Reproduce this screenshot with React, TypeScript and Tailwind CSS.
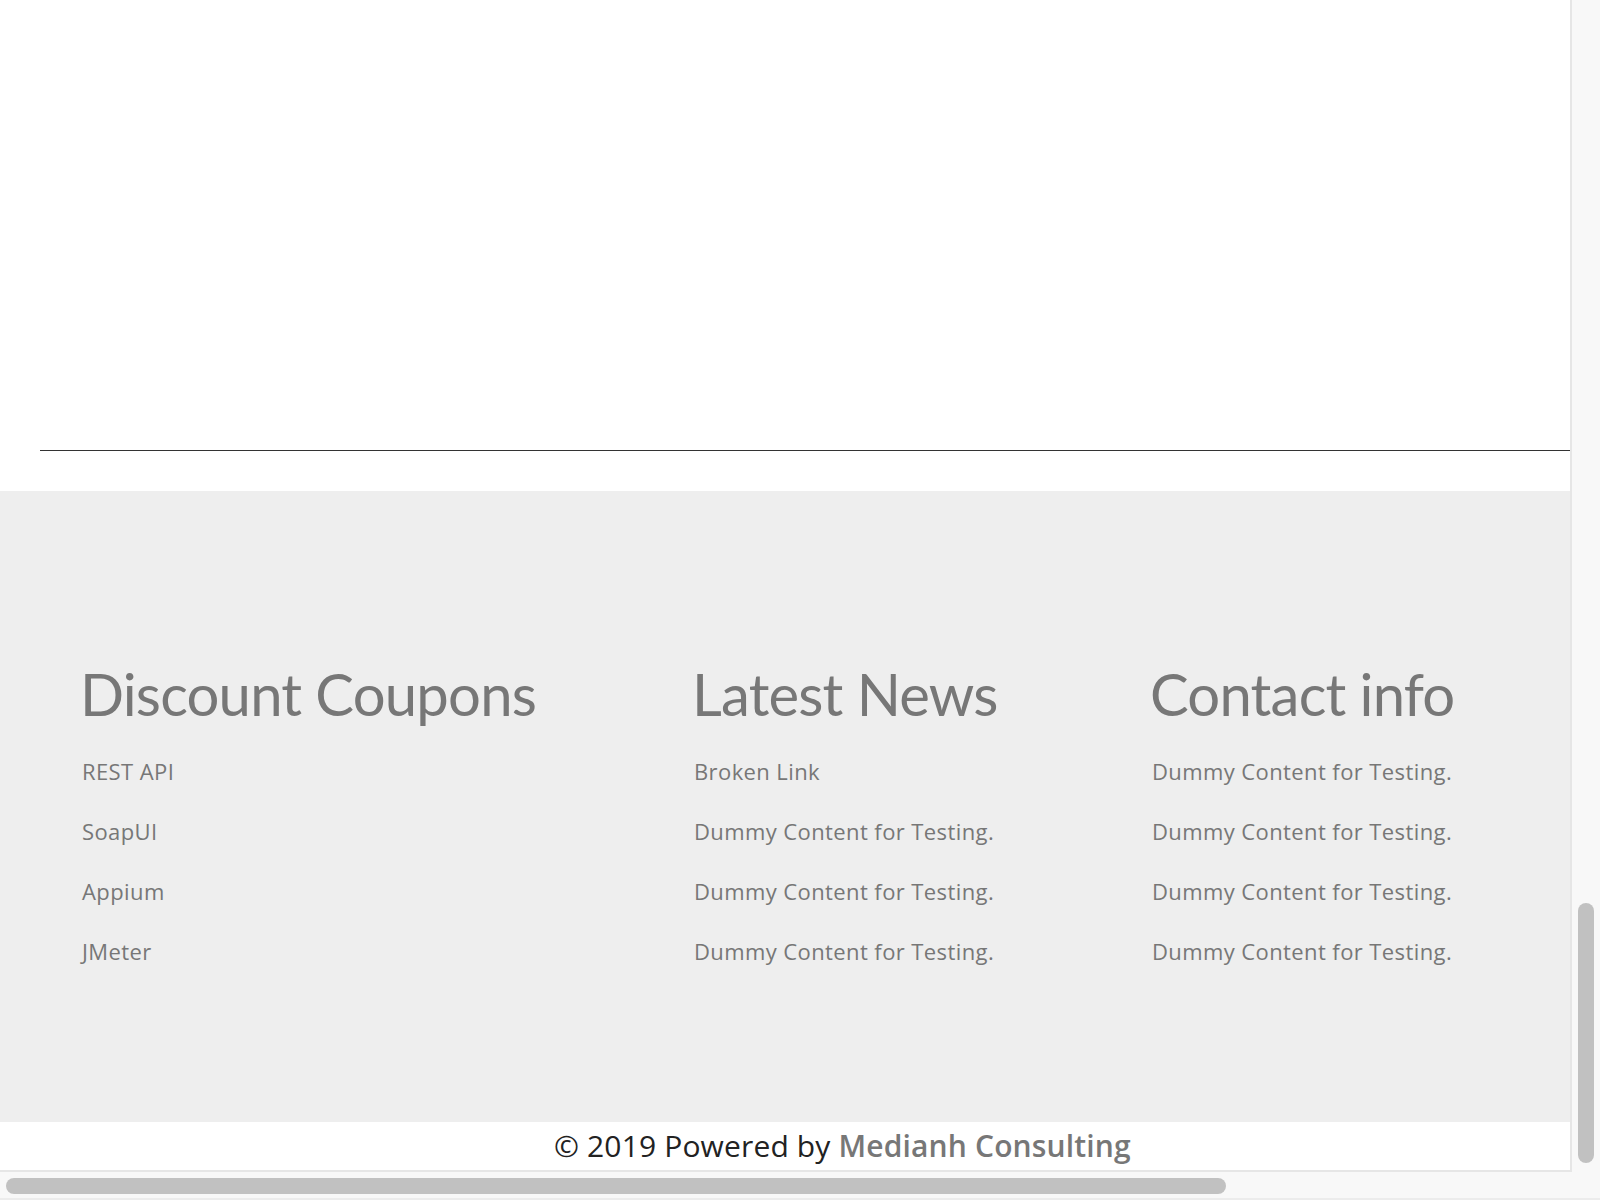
import React from "react";

const coupons = ["REST API", "SoapUI", "Appium", "JMeter"];
const news = [
  "Broken Link",
  "Dummy Content for Testing.",
  "Dummy Content for Testing.",
  "Dummy Content for Testing.",
];
const contact = [
  "Dummy Content for Testing.",
  "Dummy Content for Testing.",
  "Dummy Content for Testing.",
  "Dummy Content for Testing.",
];

function FooterColumn({ title, items }: { title: string; items: string[] }) {
  return (
    <div className="flex flex-col">
      <h2 className="-ml-[2px] font-['Lato',sans-serif] text-[58px] leading-[58px] tracking-[-0.8px] text-[#777777] whitespace-nowrap">
        {title}
      </h2>
      <ul className="mt-[18px] flex flex-col">
        {items.map((item, i) => (
          <li key={i} className="text-[22px] leading-[60px] tracking-[0.4px] text-[#777777] whitespace-nowrap">
            {item}
          </li>
        ))}
      </ul>
    </div>
  );
}

export default function App() {
  return (
    <div className="w-[1600px] h-[1200px] bg-[#f8f8f8] flex flex-col overflow-hidden font-['Open_Sans',sans-serif]">
      <div className="flex h-[1172px]">
        {/* page viewport */}
        <div className="w-[1572px] h-[1172px] bg-white border-r-2 border-b-2 border-[#e6e6e6] flex flex-col">
          {/* upper content end + rule */}
          <div className="h-[491px] flex flex-col justify-end">
            <div className="ml-[40px] h-px bg-[#333333]" />
            <div className="h-[40px]" />
          </div>

          {/* footer widgets */}
          <div className="h-[631px] bg-[#eeeeee] pt-[174px] pl-[82px] grid grid-cols-[612px_458px_1fr]">
            <FooterColumn title="Discount Coupons" items={coupons} />
            <FooterColumn title="Latest News" items={news} />
            <FooterColumn title="Contact info" items={contact} />
          </div>

          {/* copyright */}
          <div className="h-[48px] pl-[554px] text-[30px] leading-[48px] tracking-[0.15px] text-[#222222] whitespace-nowrap">
            © 2019 Powered by <span className="font-semibold text-[#777777]">Medianh Consulting</span>
          </div>
        </div>

        {/* vertical scrollbar */}
        <div className="flex-1 pt-[903px] pl-[6px]">
          <div className="w-[16px] h-[260px] rounded-full bg-[#c1c1c1]" />
        </div>
      </div>

      {/* horizontal scrollbar */}
      <div className="flex-1 pt-[6px] pl-[6px] border-b-2 border-[#ececec]">
        <div className="w-[1220px] h-[16px] rounded-full bg-[#c1c1c1]" />
      </div>
    </div>
  );
}
